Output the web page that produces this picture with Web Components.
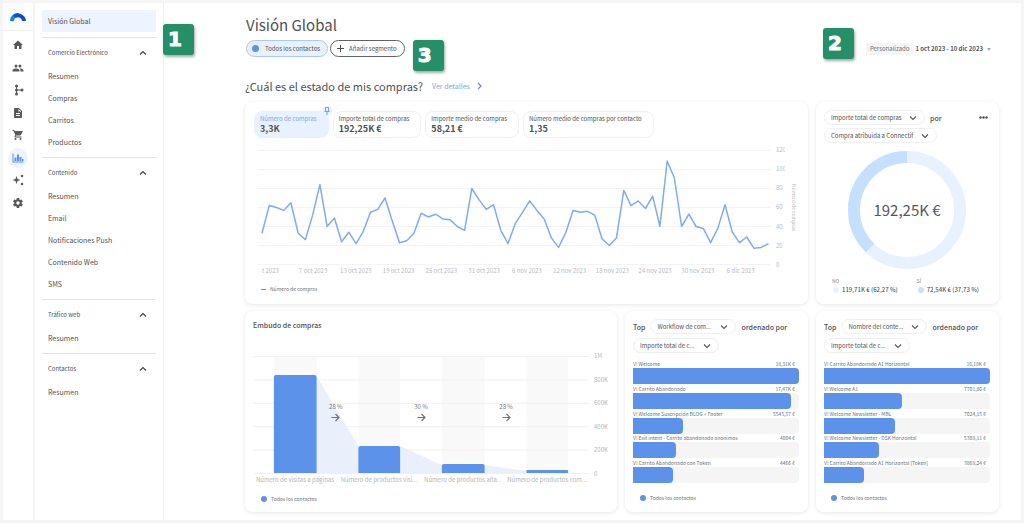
<!DOCTYPE html>
<html lang="es">
<head>
<meta charset="utf-8">
<title>Visión Global</title>
<style>
  body { margin: 0; background: #f5f5f5; font-family: "Noto Sans CJK SC", "Noto Sans", sans-serif; color: #4f5154; }
</style>
</head>
<body>
<dash-app></dash-app>
<script>
const base = `
  *, *::before, *::after { box-sizing: border-box; }
  a { color: inherit; text-decoration: none; }
  button, select { font: inherit; color: inherit; background: none; border: 0; margin: 0; padding: 0; }
  h1, h2, h3, p, ul, ol { margin: 0; padding: 0; font-weight: inherit; font-size: inherit; list-style: none; }
  svg { display: block; }
`;
function define(name, render) {
  customElements.define(name, class extends HTMLElement {
    connectedCallback() {
      if (this.shadowRoot) return;
      const t = document.createElement('template');
      t.innerHTML = `<style>${base}</style>` + render(this);
      this.attachShadow({ mode: 'open' }).append(t.content.cloneNode(true));
    }
  });
}
const at = (el, k, d = '') => el.getAttribute(k) ?? d;

const ICONS = {
  home: '<path d="M10 20v-6h4v6h5v-8h3L12 3 2 12h3v8z"/>',
  people: '<path d="M16 11a3 3 0 1 0 0-6 3 3 0 0 0 0 6zm-8 0a3 3 0 1 0 0-6 3 3 0 0 0 0 6zm0 2c-2.300 0-7 1.200-7 3.500V19h14v-2.500C15 14.200 10.300 13 8 13zm8 0h-1c1.200.800 2 2 2 3.500V19h6v-2.500c0-2.300-4.700-3.500-7-3.500z"/>',
  flow: '<circle cx="9" cy="4" r="3"/><circle cx="9" cy="12" r="3"/><circle cx="9" cy="20" r="3"/><circle cx="20" cy="12" r="3"/><path d="M8 4h2v16H8zM9 11h10v2H9z"/>',
  doc: '<path d="M14 2H6a2 2 0 0 0-2 2v16c0 1.100.900 2 2 2h12a2 2 0 0 0 2-2V8zm2 16H8v-2h8zm0-4H8v-2h8zm-3-5V3.500L18.500 9z"/>',
  cart: '<path d="M7 18a2 2 0 1 0 0 4 2 2 0 0 0 0-4zM1 2v2h2l3.600 7.600-1.400 2.400c-.7 1.300.3 3 1.800 3h12v-2H7.400l1.100-2h7.500c.7 0 1.400-.4 1.700-1l3.600-6.500A1 1 0 0 0 20.500 4H5.200l-.9-2zm16 16a2 2 0 1 0 0 4 2 2 0 0 0 0-4z"/>',
  chart: '<path d="M1 3h2v16h20v2H1zM5 11h4v7H5zM10 5h4v13h-4zM15 10h4v8h-4zM20 14h3v4h-3z"/>',
  spark: '<path d="M9 4l2.200 5.800L17 12l-5.800 2.200L9 20l-2.200-5.800L1 12l5.800-2.200z"/><circle cx="20" cy="4" r="2.500"/><circle cx="20" cy="20" r="2.500"/>',
  gear: '<path d="M19.400 13l.1-1-.1-1 2.100-1.600c.2-.2.200-.4.100-.6l-2-3.500c-.1-.2-.4-.3-.6-.2l-2.500 1-1.700-1-.4-2.600a.5.500 0 0 0-.5-.5h-4a.5.500 0 0 0-.5.500L9 5.100l-1.700 1-2.500-1c-.2-.1-.5 0-.6.200l-2 3.500c-.1.200 0 .4.100.6L4.500 11v2l-2.200 1.600c-.1.200-.2.400-.1.600l2 3.500c.1.200.4.300.6.200l2.500-1 1.700 1 .4 2.600c0 .3.200.5.500.5h4c.3 0 .5-.2.500-.5l.4-2.600 1.700-1 2.500 1c.2.100.5 0 .6-.2l2-3.500c.1-.2.100-.4-.1-.6zM12 15.500a3.500 3.500 0 1 1 0-7 3.500 3.500 0 0 1 0 7z"/>'
};

define('dash-rail', () => `
  <style>
    :host { display: block; border-right: 2px solid #f5f5f5; background: #fff; color: #58595b; }
    .logo { display: grid; place-items: center; height: 28px; border-bottom: 1px solid #f0f0f0; }
    ul { display: grid; grid-auto-rows: 1fr; height: 180px; margin-top: 3px; justify-items: center; align-items: center; }
    li a { display: grid; place-items: center; width: 20px; height: 20px; border-radius: 50%; }
    li a.on { background: #edf3ff; color: #5d92eb; }
    li svg { width: 12px; height: 12px; fill: currentColor; }
  </style>
  <a class="logo" href="#" aria-label="Inicio">
    <svg width="16" height="10" viewBox="0 0 16 10" fill="none" stroke-width="4">
      <path d="M2 9a6 6 0 0 1 6-6" stroke="#0a86f0"/><path d="M4.500 4.500a6 6 0 0 1 9.500 4.500" stroke="#0a4fd8"/>
    </svg></a>
  <ul>${Object.entries(ICONS).map(([k, p]) =>
    `<li><a href="#" aria-label="${k}" class="${k === 'chart' ? 'on' : ''}"><svg viewBox="0 0 24 24">${p}</svg></a></li>`).join('')}</ul>`);

define('dash-section', el => `
  <style>
    :host { display: block; border-top: 1px solid #e2e3e5; padding: 4px 0; }
    button { display: flex; align-items: center; justify-content: space-between; width: 100%; height: 22px; margin-bottom: 1px; padding: 0 9px 0 6px; font-size: 6px; line-height: 10px; }
    a { display: flex; align-items: center; height: 22px; padding-left: 6px; font-size: 7px; line-height: 10px; }
  </style>
  <button type="button" aria-expanded="true">${at(el, 'heading')}
    <svg width="8" height="6" viewBox="0 0 8 6" fill="none" stroke="#3f4144" stroke-width="1.200"><path d="M1 4.500L4 1.500l3 3"/></svg>
  </button>
  ${at(el, 'items').split('|').map(t => `<a href="#">${t}</a>`).join('')}`);

define('dash-nav', () => `
  <style>
    :host { display: block; padding: 7px 7px 0; border-right: 1px solid #f0f0f0; background: #fff; }
    .current { display: flex; align-items: center; height: 22px; margin-bottom: 5px; padding-left: 6px; background: #edf3ff; font-size: 7px; line-height: 10px; }
  </style>
  <nav>
    <a class="current" href="#" aria-current="page">Visión Global</a>
    <dash-section heading="Comercio Electrónico" items="Resumen|Compras|Carritos|Productos"></dash-section>
    <dash-section heading="Contenido" items="Resumen|Email|Notificaciones Push|Contenido Web|SMS"></dash-section>
    <dash-section heading="Tráfico web" items="Resumen"></dash-section>
    <dash-section heading="Contactos" items="Resumen"></dash-section>
  </nav>`);

define('dash-callout', () => `
  <style>
    :host { display: block; width: 31px; height: 31px; padding-left: 5px; border-radius: 3px; background: #248f68; box-shadow: 1px 2px 3px rgba(0,0,0,.35);
      color: #fff; font: bold 20px/30px "DejaVu Sans", sans-serif; -webkit-text-stroke: 1px #fff; }
  </style><slot></slot>`);

define('dash-card', () => `
  <style>
    :host { display: block; min-width: 0; padding: 9px 9px 9px 8px; border-radius: 8px; background: #fff; box-shadow: 0 1px 4px rgba(0,0,0,.1); }
  </style><slot></slot>`);

define('dash-select', el => `
  <style>
    :host { display: inline-grid; align-items: center; height: 15px; border: 1px solid #eeeff0; border-radius: 8px; font-size: 6px; }
    select { grid-area: 1 / 1; appearance: none; width: 100%; height: 13px; line-height: 12px; padding: 0 22px 0 6px; border-radius: 8px; }
    svg { grid-area: 1 / 1; justify-self: end; margin-right: 7px; pointer-events: none; }
  </style>
  <select aria-label="${at(el, 'label')}"><option>${at(el, 'value')}</option></select>
  <svg width="8" height="6" viewBox="0 0 8 6" fill="none" stroke="#55575a" stroke-width="1.100"><path d="M1 1.500l3 3 3-3"/></svg>`);

define('dash-metric', el => `
  <style>
    :host { display: block; position: relative; height: 27px; padding: 3px 11px 0 5px; border: 1px solid #eff0f1; border-radius: 8px; }
    :host([active]) { background: #e8f2ff; border-color: #e8f2ff; }
    p { font-size: 6px; line-height: 8px; white-space: nowrap; }
    strong { display: block; font-size: 9px; line-height: 12px; font-weight: 700; }
    :host([active]) p { color: #7ba5f0; }
    .pin { position: absolute; top: -6px; right: -4px; width: 10px; height: 10px; border-radius: 50%; background: #e8f2ff; display: grid; place-items: center; }
  </style>
  <p>${at(el, 'label')}</p><strong>${at(el, 'value')}</strong>
  ${el.hasAttribute('active') ? `<span class="pin"><svg width="6" height="8" viewBox="0 0 6 8" fill="none" stroke="#6f9ff0"><path d="M1.500 .5h3v4h-3zM.5 4.500h5M3 4.500V8"/></svg></span>` : ''}`);

define('dash-legend', () => `
  <style>
    :host { display: flex; align-items: center; gap: 4px; font-size: 5px; line-height: 8px; color: #6a6f76; }
    i { width: 6px; height: 6px; border-radius: 50%; background: #5d92eb; }
    :host([line]) i { width: 5px; height: 1px; border-radius: 0; }
  </style><i></i><slot></slot>`);

const SERIES = [33,62,60,57,65,33,26,52,84,40,49,24,34,22,35,55,58,70,46,23,25,33,54,50,53,48,47,40,36,80,68,58,63,36,22,43,55,67,57,48,28,18,34,57,55,56,52,27,20,28,78,62,67,59,72,40,109,91,40,53,40,38,23,38,63,34,23,29,17,18,22];

define('dash-line-chart', () => `
  <style>
    :host { display: grid; grid-template-columns: minmax(0, 1fr) 9px 8px; column-gap: 5px; color: #b9bbbe; font-size: 6px; line-height: 8px; }
    .plot svg { width: 100%; height: 115px; overflow: visible; }
    .y { display: flex; flex-direction: column; justify-content: space-between; margin: -4px 0; overflow: hidden; }
    .title { writing-mode: vertical-rl; text-align: center; font-size: 5px; justify-self: end; }
    .clip { overflow: hidden; margin-top: 2px; }
    .x { display: flex; margin: 0 9px 0 -17px; }
    .x span { flex: 1 0 0; text-align: center; white-space: nowrap; }
    .x span:first-child { padding-left: 8px; }
  </style>
  <div class="plot"><svg viewBox="0 0 513 115" preserveAspectRatio="none" fill="none">
    <path stroke="#f3f3f4" vector-effect="non-scaling-stroke" d="${[0,1,2,3,4,5,6].map(i => `M0 ${i * 19 + .5}H513`).join('')}"/>
    <polyline stroke="#7eabf3" stroke-width="1.500" stroke-linejoin="round" vector-effect="non-scaling-stroke" points="${SERIES.map((v, i) => `${(4 + i * 7.235).toFixed(1)},${(114.5 - v * .95).toFixed(1)}`).join(' ')}"/>
  </svg></div>
  <div class="y">${[120,100,80,60,40,20,0].map(v => `<span>${v}</span>`).join('')}</div>
  <div class="title">Número de compras</div>
  <div class="clip"><div class="x">${['t 2023','7 oct 2023','13 oct 2023','19 oct 2023','25 oct 2023','31 oct 2023','6 nov 2023','12 nov 2023','18 nov 2023','24 nov 2023','30 nov 2023','6 dic 2023'].map(t => `<span>${t}</span>`).join('')}</div></div>`);

define('dash-funnel', () => `
  <style>
    :host { display: grid; grid-template-columns: minmax(0, 1fr) 14px; column-gap: 5px; color: #b3b5b8; font-size: 6px; line-height: 8px; }
    .plot { position: relative; }
    .plot > svg { width: 100%; height: 118px; }
    .steps { position: absolute; inset: 0 12% 0 12%; display: flex; align-items: center; }
    .steps div { flex: 1; display: grid; justify-items: center; gap: 2px; padding-bottom: 6px; color: #77797d; }
    .y { display: flex; flex-direction: column; justify-content: space-between; margin: -4px 0; }
    .x { display: flex; margin-top: 2px; }
    .x span { flex: 1 0 0; min-width: 0; text-align: center; white-space: nowrap; }
  </style>
  <div class="plot">
    <svg viewBox="0 0 338 118" preserveAspectRatio="none">
      <path fill="#f9f9f9" d="M21 0h43v118H21zM106 0h42v118h-42zM190 0h43v118h-43zM275 0h42v118h-42z"/>
      <path fill="none" stroke="#f0f0f1" vector-effect="non-scaling-stroke" d="${[0,1,2,3,4,5].map(i => `M0 ${(i * 23.4 + .5).toFixed(1)}H338`).join('')}"/>
      <path fill="#e9f0fc" d="M64 20l42 70v27H64zM148 90l42 19v8h-42zM233 109l42 6v2h-42z"/>
      <path fill="#5d92eb" d="M21 117V21q0-2 2-2h39q2 0 2 2v96zM106 117V92q0-2 2-2h38q2 0 2 2v25zM190 117v-7q0-2 2-2h39q2 0 2 2v7zM275 117v-2q0-1 1-1h40q1 0 1 1v2z"/>
    </svg>
    <div class="steps">${['28 %','30 %','28 %'].map(t => `<div>${t}<svg width="9" height="9" viewBox="0 0 9 9" fill="none" stroke="#707276" stroke-width="1.200"><path d="M.5 4.500h7.500M4.500 1l3.500 3.500L4.500 8"/></svg></div>`).join('')}</div>
  </div>
  <div class="y">${['1M','800K','600K','400K','200K','0'].map(v => `<span>${v}</span>`).join('')}</div>
  <div class="x"><span>Número de visitas a páginas</span><span>Número de productos visi...</span><span>Número de productos aña...</span><span>Número de productos com...</span></div>`);

define('dash-donut', () => `
  <style>
    :host { display: grid; place-items: center; }
    svg, p { grid-area: 1 / 1; }
    p { font-size: 15px; line-height: 20px; color: #54575c; }
  </style>
  <svg width="118" height="118" viewBox="0 0 118 118" fill="none" stroke-width="12">
    <circle cx="59" cy="59" r="53" stroke="#e8f2ff"/>
    <circle cx="59" cy="59" r="53" stroke="#c5e0ff" pathLength="100" stroke-dasharray="37.730 62.270" transform="rotate(134.200 59 59)"/>
  </svg>
  <p>192,25K €</p>`);

define('dash-top', el => `
  <style>
    :host { display: block; }
    header { display: flex; flex-wrap: wrap; align-items: center; gap: 4px 5px; margin-top: -1px; font-size: 7px; line-height: 10px; font-weight: 500; }
    dash-select { width: 86px; font-weight: 400; }
    ol { display: flex; flex-direction: column; justify-content: space-between; height: 123px; margin: 7px 0 11px; }
    li { font-size: 5px; line-height: 8px; color: #6a6f76; }
    li div { display: flex; justify-content: space-between; padding-right: 4px; }
    .track { display: block; height: 16px; border-radius: 0 4px 4px 0; background: #f5f5f5; }
    .track i { display: block; height: 16px; border-radius: 0 4px 4px 0; background: #5d92eb; }
    dash-legend { margin-left: 7px; }
  </style>
  <header>Top <dash-select label="Dimensión" value="${at(el, 'dimension')}"></dash-select> ordenado por
    <dash-select label="Métrica" value="Importe total de c..."></dash-select></header>
  <ol>${at(el, 'rows').split('|').map(r => r.split(';')).map(([n, v, w]) =>
    `<li><div><span>${n}</span><span>${v}</span></div><span class="track"><i style="width:${w}%"></i></span></li>`).join('')}</ol>
  <dash-legend>Todos los contactos</dash-legend>`);

define('dash-app', () => `
  <style>
    :host { display: grid; grid-template-columns: 32px 129px minmax(0, 1fr); min-height: calc(100vh - 6px); margin: 3px; background: #fff; }
    main { min-width: 0; padding: 10px 22px 7px 81px; }
    .top { display: flex; justify-content: space-between; align-items: flex-end; height: 44px; }
    h1 { padding-left: 1px; font-size: 15px; line-height: 24px; margin-bottom: 3px; }
    .chips { position: relative; display: flex; gap: 2px; padding-left: 1px; width: max-content; }
    .chips button { display: flex; align-items: center; gap: 5px; height: 17px; padding: 0 7px 0 6px; border: 1px solid #606265; border-radius: 9px; font-size: 6px; line-height: 10px; }
    .chips button.on { gap: 6px; padding: 0 7px 0 5px; border-color: #a9c7f8; background: #e8f2ff; }
    .chips i { width: 7px; height: 7px; border-radius: 50%; background: #5d92eb; }
    .wrap { position: relative; }
    dash-callout { position: absolute; }
    .n1 { top: 11px; left: -82px; }
    .n3 { top: 0; left: 100%; margin-left: 8px; }
    .date { position: relative; display: flex; align-items: center; gap: 2px; margin: 0 8px 2px 0; font-size: 6px; line-height: 12px; color: #505a66; }
    .date span { padding: 0 4px; background: #f5f5f5; color: #6c7176; }
    .date button { display: flex; align-items: center; gap: 4px; font-weight: 700; }
    .n2 { right: 100%; bottom: -4px; margin-right: 12px; }
    .question { display: flex; align-items: center; gap: 9px; height: 24px; margin: 17px 0 4px; }
    h2 { font-size: 11px; line-height: 16px; }
    .question a { display: flex; align-items: center; gap: 7px; color: #7ba5f0; font-size: 7px; line-height: 10px; }
    .cards { display: grid; grid-template-columns: 372fr 183fr 183fr; gap: 7px 8px; }
    .wide { grid-column: span 2; padding-left: 9px; }
    .metrics { display: flex; gap: 4px; margin-bottom: 12px; }
    .wide dash-legend { margin: 10px 0 2px 7px; }
    dash-line-chart { margin: 0 1px 0 4px; }
    .filters { display: flex; flex-wrap: wrap; align-items: center; gap: 3px 5px; margin-top: -1px; font-size: 7px; line-height: 10px; font-weight: 500; }
    .filters dash-select { font-weight: 400; }
    .filters button { margin-left: auto; padding-right: 2px; }
    dash-donut { margin: 8px 0; }
    .split { display: flex; justify-content: space-between; padding: 0 11px 0 8px; color: #505a66; font-size: 6px; line-height: 9px; font-weight: 500; }
    .split small { display: block; font-size: 5px; line-height: 8px; font-weight: 400; color: #85888d; }
    .split p { display: flex; align-items: center; gap: 3px; }
    .split i { width: 6px; height: 6px; border-radius: 50%; background: #e8f2ff; margin-left: 1px; }
    .split .yes { background: #c5e0ff; }
    h3 { font-size: 7px; line-height: 10px; font-weight: 500; margin-bottom: 26px; }
    .funnel dash-legend { margin: 11px 0 0 8px; }
  </style>
  <dash-rail></dash-rail>
  <dash-nav></dash-nav>
  <main>
    <div class="top">
      <div class="wrap">
        <h1>Visión Global</h1>
        <div class="chips">
          <button type="button" class="on"><i></i>Todos los contactos</button>
          <button type="button"><svg width="7" height="7" viewBox="0 0 7 7" stroke="#4b4d50"><path d="M3.500 0v7M0 3.500h7"/></svg>Añadir segmento</button>
          <dash-callout class="n3">3</dash-callout>
        </div>
        <dash-callout class="n1">1</dash-callout>
      </div>
      <div class="date">
        <dash-callout class="n2">2</dash-callout>
        <span>Personalizado</span>
        <button type="button">1 oct 2023 - 10 dic 2023 <svg width="4" height="3" viewBox="0 0 4 3" fill="#a9adb2"><path d="M0 0h4L2 3z"/></svg></button>
      </div>
    </div>
    <div class="question">
      <h2>¿Cuál es el estado de mis compras?</h2>
      <a href="#">Ver detalles <svg width="5" height="8" viewBox="0 0 5 8" fill="none" stroke="#5d92eb" stroke-width="1.300"><path d="M1 1l3 3-3 3"/></svg></a>
    </div>
    <div class="cards">
      <dash-card class="wide">
        <div class="metrics">
          <dash-metric active label="Número de compras" value="3,3K"></dash-metric>
          <dash-metric label="Importe total de compras" value="192,25K €"></dash-metric>
          <dash-metric label="Importe medio de compras" value="58,21 €"></dash-metric>
          <dash-metric label="Número medio de compras por contacto" value="1,35"></dash-metric>
        </div>
        <dash-line-chart></dash-line-chart>
        <dash-legend line>Número de compras</dash-legend>
      </dash-card>
      <dash-card>
        <div class="filters">
          <dash-select label="Métrica" value="Importe total de compras"></dash-select> por
          <button type="button" aria-label="Más opciones"><svg width="9" height="3" viewBox="0 0 9 3" fill="#4b4d50"><circle cx="1.500" cy="1.500" r="1.200"/><circle cx="4.500" cy="1.500" r="1.200"/><circle cx="7.500" cy="1.500" r="1.200"/></svg></button>
          <dash-select label="Dimensión" value="Compra atribuida a Connectif"></dash-select>
        </div>
        <dash-donut></dash-donut>
        <div class="split">
          <div><small>NO</small><p><i></i>119,71K € (62,27 %)</p></div>
          <div><small>SÍ</small><p><i class="yes"></i>72,54K € (37,73 %)</p></div>
        </div>
      </dash-card>
      <dash-card class="funnel">
        <h3>Embudo de compras</h3>
        <dash-funnel></dash-funnel>
        <dash-legend>Todos los contactos</dash-legend>
      </dash-card>
      <dash-card>
        <dash-top dimension="Workflow de com..." rows="V! Welcome;18,31K €;100|V! Carrito Abandonado;17,47K €;95|V! Welcome Suscripción BLOG + Footer;5545,57 €;30|V! Exit intent - Carrito abandonado anonimos;4804 €;26|V! Carrito Abandonado con Token;4466 €;24"></dash-top>
      </dash-card>
      <dash-card>
        <dash-top dimension="Nombre del conte..." rows="V! Carrito Abandonado A1 Horizontal;16,18K €;100|V! Welcome A1;7701,86 €;47|V! Welcome Newsletter - MBL;7024,15 €;43|V! Welcome Newsletter - DSK Horizontal;5389,11 €;33|V! Carrito Abandonado A1 Horizontal [Token];3869,24 €;24"></dash-top>
      </dash-card>
    </div>
  </main>`);
</script>
</body>
</html>
